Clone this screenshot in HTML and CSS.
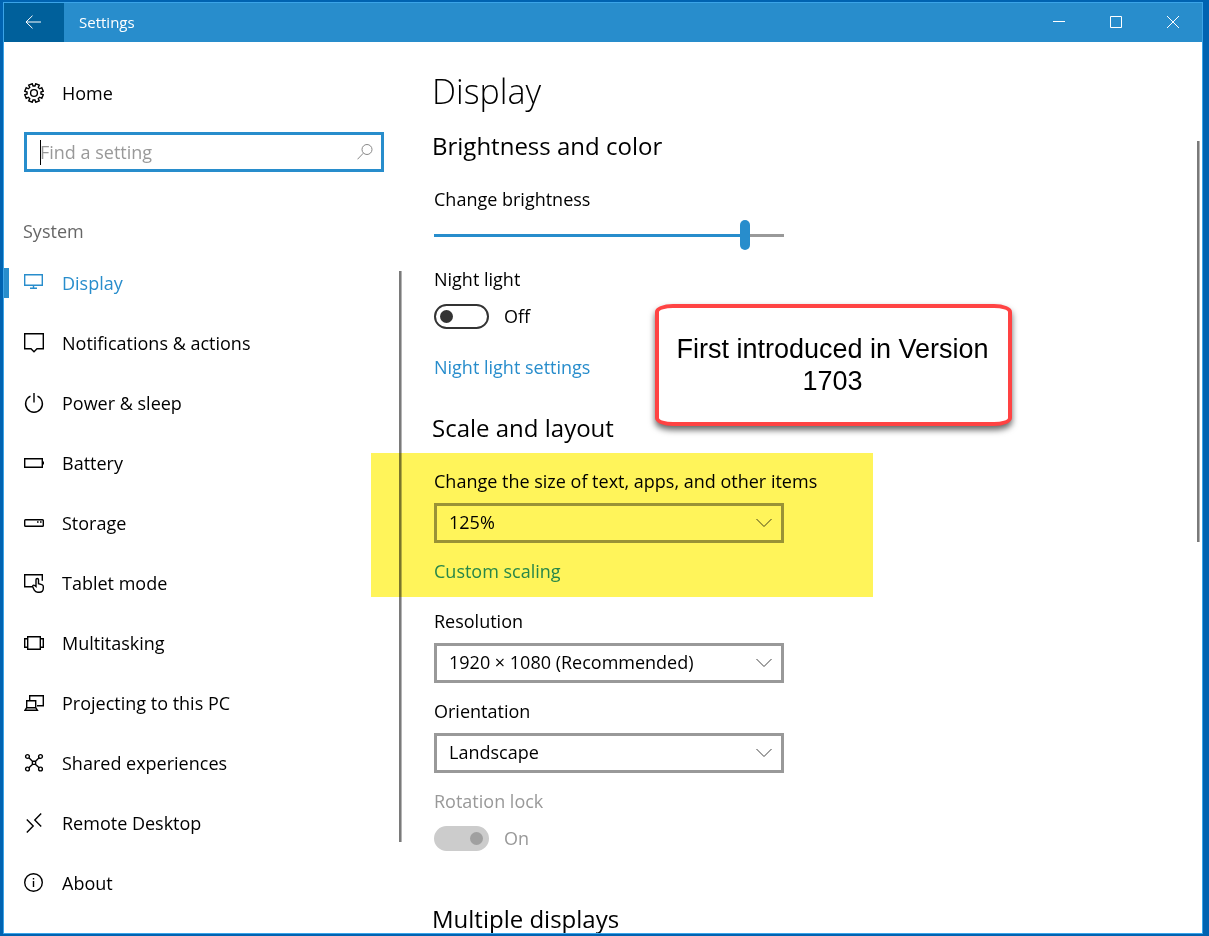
FILE: index.html
```html
<!DOCTYPE html>
<html lang="en">
<head>
    <meta charset="UTF-8">
    <meta name="viewport" content="width=device-width, initial-scale=1.0">
    <title>Settings</title>
    <link rel="stylesheet" href="styles.css">
</head>
<body>
    <div class="window">
        <header class="titlebar">
            <button type="button" class="back-btn" aria-label="Back">
                <svg width="16" height="14" viewBox="0 0 16 14"><path d="M7.5 .7 1 7l6.500 6.300M1 7h15"/></svg>
            </button>
            <span class="title">Settings</span>
            <div class="window-controls">
                <button type="button" aria-label="Minimize">
                    <svg width="12" height="12" viewBox="0 0 12 12"><path d="M0 5.500h12"/></svg>
                </button>
                <button type="button" aria-label="Maximize">
                    <svg width="12" height="12" viewBox="0 0 12 12"><path d="M.5.5h11v11H.5z"/></svg>
                </button>
                <button type="button" aria-label="Close">
                    <svg width="12" height="12" viewBox="0 0 12 12"><path d="M0 0l12 12M12 0 0 12"/></svg>
                </button>
            </div>
        </header>

        <div class="content">
            <aside class="sidebar">
                <a href="#" class="nav-link home">
                    <svg class="icon" viewBox="0 0 20 20"><path d="M8.240.760 L9.040 3.060 L10.960 3.060 L11.760.760 L15.290 2.220 L14.230 4.410 L15.590 5.770 L17.780 4.710 L19.240 8.240 L16.940 9.040 L16.940 10.960 L19.240 11.760 L17.780 15.290 L15.590 14.230 L14.230 15.590 L15.290 17.780 L11.760 19.240 L10.960 16.940 L9.040 16.940 L8.240 19.240 L4.710 17.780 L5.770 15.590 L4.410 14.230 L2.220 15.290 L.760 11.760 L3.060 10.960 L3.060 9.040 L.760 8.240 L2.220 4.710 L4.410 5.770 L5.770 4.410 L4.710 2.220 Z"/><circle cx="10" cy="10" r="3.400"/></svg>
                    <span>Home</span>
                </a>

                <form class="search">
                    <input type="text" class="search-input" placeholder="Find a setting" aria-label="Find a setting">
                    <svg class="search-icon" width="16" height="16" viewBox="0 0 16 16"><circle cx="10" cy="5.500" r="5"/><path d="M6.300 9.200.5 15.300"/></svg>
                </form>

                <div class="nav-title">System</div>

                <div class="nav-scroll">
                    <nav class="nav-list">
                        <a href="#" class="nav-link active">
                            <svg class="icon" viewBox="0 0 20 20"><path d="M.7 1.700h17.600v10.600H.7zM9.500 12.300v3M6 15.300h7"/></svg>
                            <span>Display</span>
                        </a>
                        <a href="#" class="nav-link">
                            <svg class="icon" viewBox="0 0 20 20"><path d="M.7.7h18.600v15H13l-3 3-3-3H.7z"/></svg>
                            <span>Notifications &amp; actions</span>
                        </a>
                        <a href="#" class="nav-link">
                            <svg class="icon" viewBox="0 0 20 20"><path d="M10 0v9.500M6.500 3.200a8.400 8.400 0 1 0 7 0"/></svg>
                            <span>Power &amp; sleep</span>
                        </a>
                        <a href="#" class="nav-link">
                            <svg class="icon" viewBox="0 0 20 20"><path d="M.7 5.700h17.600v8.600H.7zM19.300 8.500v3"/></svg>
                            <span>Battery</span>
                        </a>
                        <a href="#" class="nav-link">
                            <svg class="icon" viewBox="0 0 20 20"><rect x=".7" y="6.700" width="18.600" height="6.600" rx=".8"/><path d="M13 9h1.600M16 9h1.600"/></svg>
                            <span>Storage</span>
                        </a>
                        <a href="#" class="nav-link">
                            <svg class="icon" viewBox="0 0 20 20"><path d="M8.500 13.700H.7V1.700h17.600v6"/><path d="M12 13.500V6.800a1.250 1.250 0 0 1 2.500 0v4l3.300.8c1 .3 1.500.9 1.500 1.900v1.700c0 2.500-1.800 4-4 4h-1.600c-1.600 0-2.700-.8-3.400-2l-1.600-3.500c-.3-1.400 1-2 2-1.200z"/></svg>
                            <span>Tablet mode</span>
                        </a>
                        <a href="#" class="nav-link">
                            <svg class="icon" viewBox="0 0 20 20"><path d="M3.700 3.700h12.600v12.600H3.700zM3 5.700H.7v8.600H3M17 5.700h2.300v8.600H17"/></svg>
                            <span>Multitasking</span>
                        </a>
                        <a href="#" class="nav-link">
                            <svg class="icon" viewBox="0 0 20 20"><path d="M5.700 7V2.700h13.600v10H13M2.700 7.700h9v7h-9zM2.700 14.700l-1.700 2.600h12.400l-1.700-2.600"/></svg>
                            <span>Projecting to this PC</span>
                        </a>
                        <a href="#" class="nav-link">
                            <svg class="icon" viewBox="0 0 20 20"><circle cx="3.500" cy="3.500" r="1.900"/><circle cx="16.500" cy="3.500" r="1.900"/><circle cx="3.500" cy="16" r="1.900"/><circle cx="16.500" cy="16" r="1.900"/><path d="M8.400 8.200h3.200v3.200H8.400zM4.900 4.800l3.500 3.400M15.100 4.800l-3.500 3.400M4.900 14.700l3.500-3.300M15.100 14.700l-3.500-3.300"/></svg>
                            <span>Shared experiences</span>
                        </a>
                        <a href="#" class="nav-link">
                            <svg class="icon" viewBox="0 0 20 20"><path d="M2.800 6.500 9.200 13l-6.400 6.500M17.200.5 10.800 7l6.400 6.500"/></svg>
                            <span>Remote Desktop</span>
                        </a>
                        <a href="#" class="nav-link">
                            <svg class="icon" viewBox="0 0 20 20"><circle cx="9.500" cy="9.500" r="8.800"/><path d="M9.500 8v6M9.500 5v1.500"/></svg>
                            <span>About</span>
                        </a>
                    </nav>
                    <div class="scrollbar"></div>
                </div>
            </aside>

            <main class="main">
                <h1>Display</h1>

                <section>
                    <h2>Brightness and color</h2>
                    <div class="field">
                        <label for="brightness">Change brightness</label>
                        <input type="range" id="brightness" class="slider" min="0" max="100" value="90">
                    </div>
                    <div class="field">
                        <div class="field-title">Night light</div>
                        <div class="toggle-row">
                            <input type="checkbox" id="night-light" class="toggle">
                            <label for="night-light">Off</label>
                        </div>
                    </div>
                    <a href="#" class="link night-link">Night light settings</a>
                    <div class="callout">First introduced in Version 1703</div>
                </section>

                <section>
                    <h2>Scale and layout</h2>
                    <div class="scaling">
                        <div class="field">
                            <label for="scale">Change the size of text, apps, and other items</label>
                            <div class="select">
                                <select id="scale">
                                    <option>125%</option>
                                </select>
                                <svg width="16" height="10" viewBox="0 0 16 10"><path d="M.5 1 8 8.500 15.500 1"/></svg>
                            </div>
                        </div>
                        <a href="#" class="link">Custom scaling</a>
                    </div>
                    <div class="field resolution">
                        <label for="resolution">Resolution</label>
                        <div class="select">
                            <select id="resolution">
                                <option>1920 × 1080 (Recommended)</option>
                            </select>
                            <svg width="16" height="10" viewBox="0 0 16 10"><path d="M.5 1 8 8.500 15.500 1"/></svg>
                        </div>
                    </div>
                    <div class="field">
                        <label for="orientation">Orientation</label>
                        <div class="select">
                            <select id="orientation">
                                <option>Landscape</option>
                            </select>
                            <svg width="16" height="10" viewBox="0 0 16 10"><path d="M.5 1 8 8.500 15.500 1"/></svg>
                        </div>
                    </div>
                    <div class="field disabled">
                        <div class="field-title">Rotation lock</div>
                        <div class="toggle-row">
                            <input type="checkbox" id="rotation-lock" class="toggle" checked disabled>
                            <label for="rotation-lock">On</label>
                        </div>
                    </div>
                </section>

                <section class="multiple">
                    <h2>Multiple displays</h2>
                </section>
            </main>

            <div class="scrollbar page-scrollbar"></div>
        </div>
    </div>
</body>
</html>
```

FILE: styles.css
```css
* {
    margin: 0;
    padding: 0;
    box-sizing: border-box;
}

body {
    height: 100vh;
    padding: 2px 6px 2px 3px;
    background-color: #0063b1;
    color: #000;
    font-family: "Segoe UI", "Open Sans", sans-serif;
    font-size: 18px;
    line-height: 24px;
}

input,
select,
button {
    font: inherit;
    color: inherit;
}

a {
    text-decoration: none;
}

svg {
    fill: none;
    stroke: currentColor;
}

.window {
    display: flex;
    flex-direction: column;
    height: 100%;
    border: 1px solid #3ba4e8;
    background: #fff;
    overflow: hidden;
}

/* Title bar */
.titlebar {
    display: flex;
    flex: none;
    align-items: stretch;
    height: 39px;
    background-color: #288dcc;
    color: #fff;
}

.titlebar button {
    display: flex;
    align-items: center;
    justify-content: center;
    border: none;
    background: none;
}

.titlebar .back-btn {
    width: 60px;
    padding-right: 2px;
    padding-bottom: 2px;
    background-color: #00609b;
}

.title {
    padding-left: 15px;
    font-size: 15px;
    line-height: 39px;
}

.window-controls {
    display: flex;
    margin-left: auto;
    padding: 0 1px 1px 0;
}

.window-controls button {
    width: 57px;
}

.content {
    display: flex;
    flex: 1;
    min-height: 0;
}

/* Sidebar */
.sidebar {
    display: flex;
    flex: none;
    flex-direction: column;
    width: 398px;
    padding-top: 21px;
}

.nav-link {
    display: flex;
    align-items: center;
    gap: 18px;
    height: 60px;
    padding-left: 20px;
    color: #000;
}

.icon {
    flex: none;
    width: 20px;
    height: 20px;
    stroke-width: 1.4;
}

.search {
    position: relative;
    margin: 9px 18px 0 20px;
}

.search-input {
    display: block;
    width: 100%;
    height: 40px;
    padding: 0 40px 0 13px;
    border: 3px solid #288dcc;
    outline: none;
}

/* steady caret in front of the hint */
.search-input:placeholder-shown {
    background: linear-gradient(#000, #000) no-repeat 13px center / 1px 25px;
    caret-color: transparent;
}

.search-input::placeholder {
    color: #999;
    opacity: 1;
}

.search-icon {
    position: absolute;
    top: 12px;
    right: 11px;
    color: #888;
    pointer-events: none;
}

.nav-title {
    margin-top: 47px;
    padding-left: 19px;
    color: #666;
}

.nav-scroll {
    display: flex;
    margin-top: 10px;
}

.nav-list {
    flex: 1;
}

.nav-link.active {
    color: #288dcc;
    background: linear-gradient(#288dcc, #288dcc) no-repeat left center / 5px 30px;
}

.scrollbar {
    flex: none;
    width: 3px;
    height: 571px;
    margin-top: 18px;
    border-right: 1px solid #b4b4b4;
    background-color: #7a7a7a;
}

.page-scrollbar {
    height: 45%;
    margin: 99px 2px 0 0;
}

/* Main */
.main {
    flex: 1;
    min-width: 0;
    padding: 25px 20px 0 32px;
}

h1,
h2 {
    margin-left: -2px;
}

h1 {
    font-size: 34px;
    font-weight: 350;
    line-height: 48px;
    margin-bottom: 15px;
}

h2 {
    font-size: 24px;
    font-weight: 400;
    line-height: 32px;
    margin-bottom: 25px;
}

section {
    position: relative;
    margin-bottom: 33px;
}

.field {
    max-width: 350px;
    margin-bottom: 16px;
}

.field > label,
.field-title {
    display: block;
    white-space: nowrap;
}

.link {
    display: block;
    width: fit-content;
    color: #288dcc;
}

.slider {
    display: block;
    width: 100%;
    height: 30px;
    margin: 9px 0 17px;
    appearance: none;
    background: linear-gradient(to right, #288dcc 90%, #999 90%) no-repeat center / 100% 3px;
}

.slider::-webkit-slider-thumb {
    appearance: none;
    width: 10px;
    height: 30px;
    border-radius: 5px;
    background: #288dcc;
}

.toggle-row {
    display: flex;
    align-items: center;
    gap: 15px;
    height: 26px;
    margin-top: 12px;
}

.toggle {
    display: flex;
    align-items: center;
    width: 55px;
    height: 25px;
    padding: 0 4px;
    border: 2px solid #333;
    border-radius: 13px;
    appearance: none;
}

.toggle::before {
    content: "";
    width: 13px;
    height: 13px;
    border-radius: 50%;
    background: #333;
}

.toggle:checked {
    justify-content: flex-end;
}

.toggle:disabled {
    border-color: #ccc;
    background: #ccc;
}

.toggle:disabled::before {
    background: #a0a0a0;
}

.disabled {
    color: #999;
}

.night-link {
    margin-top: 26px;
}

.select {
    position: relative;
    margin-top: 10px;
}

.select select {
    display: block;
    width: 100%;
    height: 40px;
    padding: 0 40px 2px 12px;
    border: 3px solid #999;
    border-radius: 0;
    background: #fff;
    appearance: none;
}

.select svg {
    position: absolute;
    top: 15px;
    right: 12px;
    color: #444;
    pointer-events: none;
}

.scaling {
    position: relative;
}

/* marker pen over the scaling options */
.scaling::after {
    content: "";
    position: absolute;
    top: -16px;
    left: -63px;
    width: 502px;
    height: 144px;
    background: #fff45a;
    mix-blend-mode: multiply;
    pointer-events: none;
}

.resolution {
    margin-top: 26px;
}

.multiple {
    margin-top: 52px;
}

.callout {
    position: absolute;
    top: 174px;
    left: 221px;
    width: 357px;
    padding: 25px 10px 25px 8px;
    border: 4px solid #ff4343;
    border-radius: 18px / 8px;
    background: #fff;
    box-shadow: 0 4px 6px rgba(0, 0, 0, 0.6);
    font-family: "Liberation Sans", Arial, sans-serif;
    font-size: 27px;
    line-height: 32px;
    text-align: center;
}
```
